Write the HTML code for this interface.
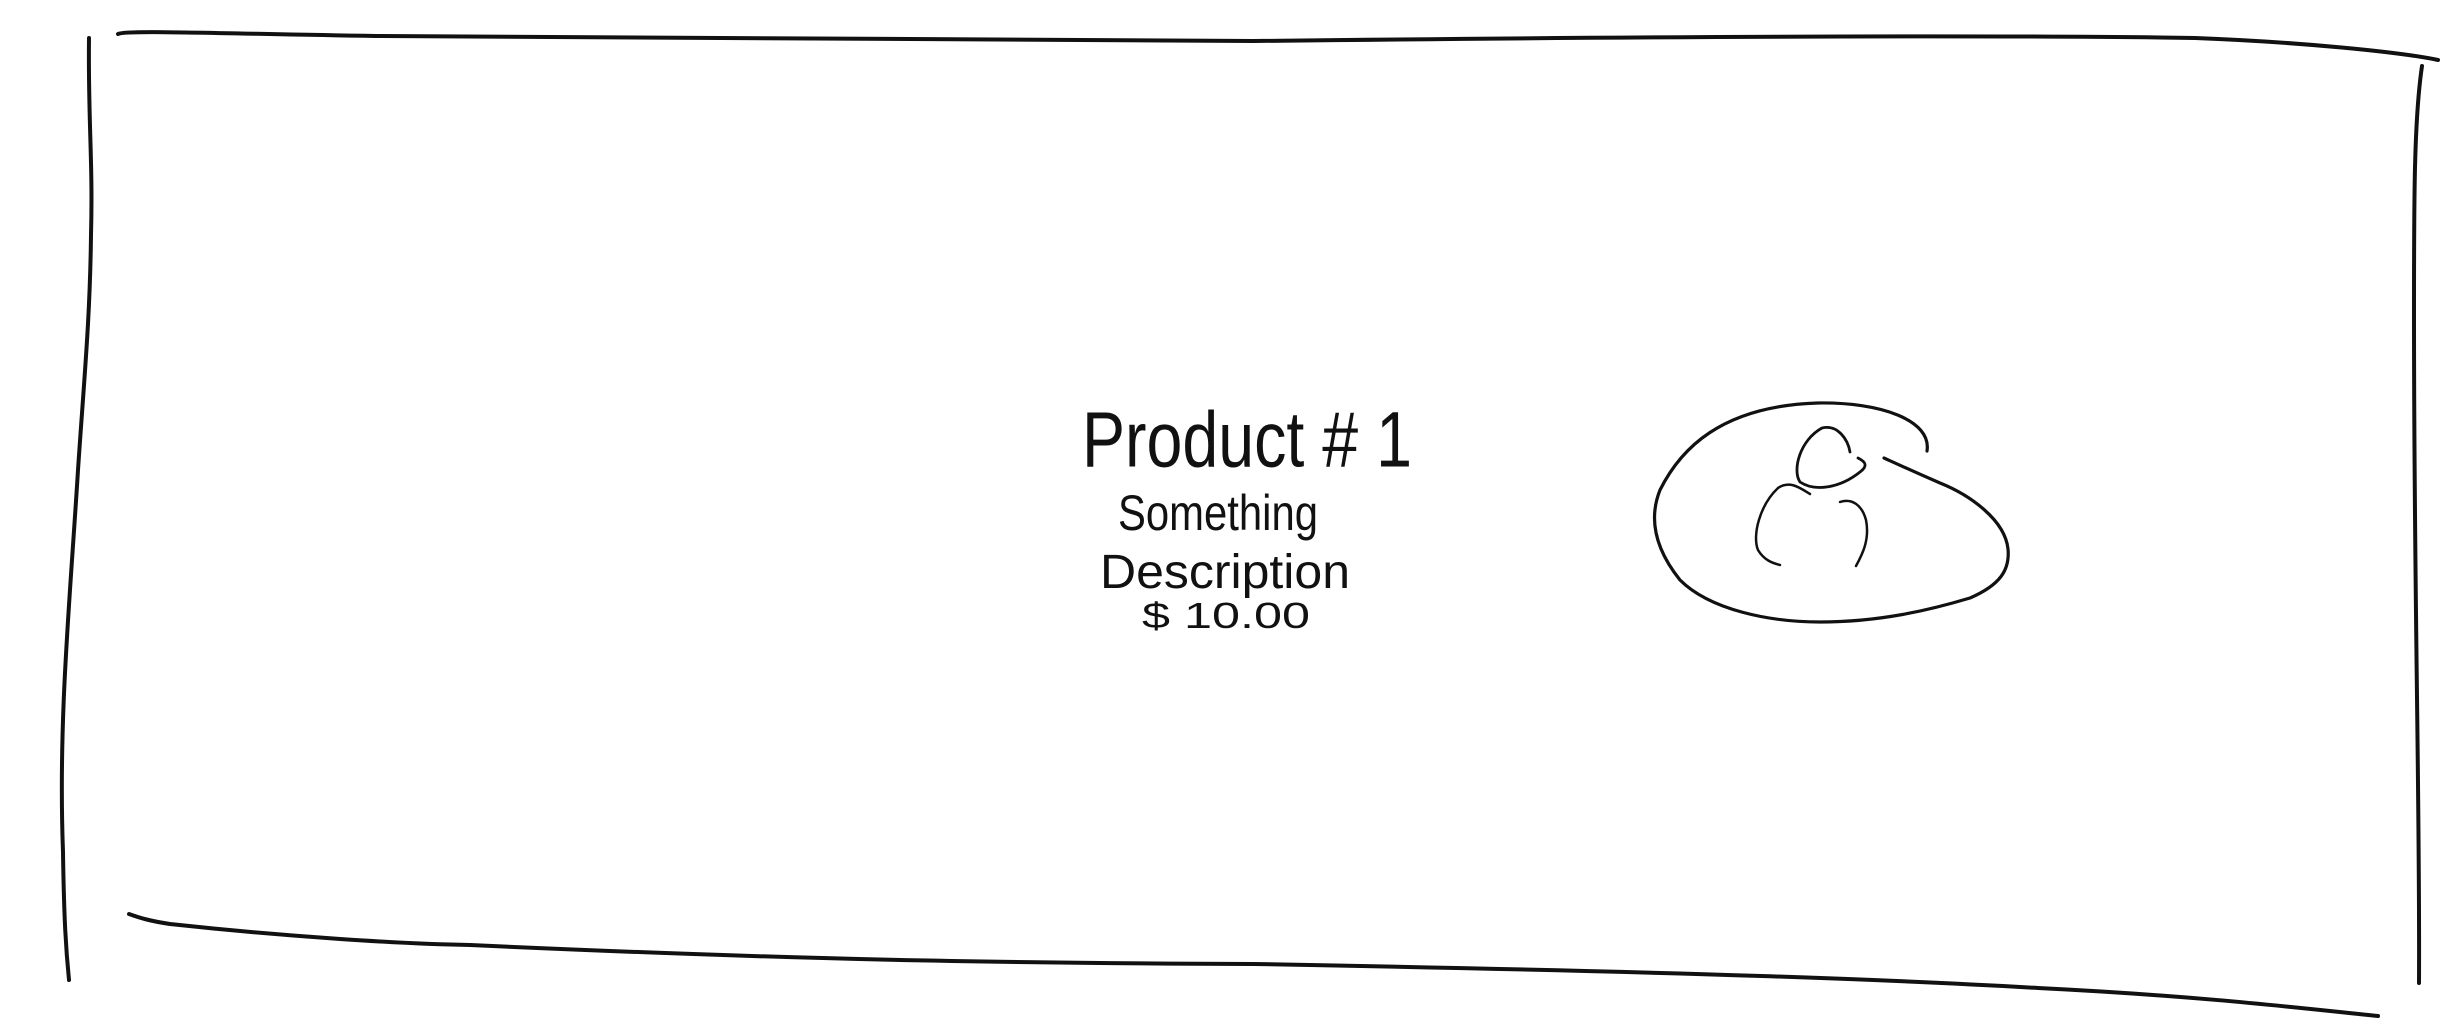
<!DOCTYPE html>
<html><head><meta charset="utf-8"><style>
html,body{margin:0;padding:0;background:#fff;width:2458px;height:1036px;overflow:hidden}
svg{display:block}
text{font-family:"Liberation Sans",sans-serif;fill:#111}
</style></head><body>
<svg width="2458" height="1036" viewBox="0 0 2458 1036" xmlns="http://www.w3.org/2000/svg">
<g fill="none" stroke="#111" stroke-linecap="round" stroke-width="4">
<path d="M118,34 C125,30 200,33 376,36 C700,40 1000,42 1254,41 C1700,36 2000,35 2195,38 C2300,42 2400,52 2438,60"/>
<path d="M89,38 C88,120 93,160 91,235 C90,320 84,380 78,470 C70,600 58,720 63,852 C64,920 66,950 69,980"/>
<path d="M2422,66 C2414,120 2414,200 2414,314 C2414,600 2420,800 2419,983"/>
<path d="M129,914 C140,918 150,921 170,924 C280,936 400,944 470,945 C800,960 1000,963 1254,964 C1700,972 1900,980 2038,988 C2200,996 2300,1008 2378,1016"/>
<path stroke-width="3.2" d="M1927,451 C1932,420 1880,402 1818,403 C1720,406 1680,450 1660,490 C1650,515 1652,545 1680,580 C1710,610 1770,622 1820,622 C1880,622 1930,610 1970,598 C2000,585 2010,570 2008,549 C2005,520 1970,495 1940,483 C1910,470 1895,463 1884,458"/>
<path stroke-width="2.8" d="M1858,458 C1866,462 1868,466 1860,472 C1840,488 1815,492 1800,482 C1792,470 1800,440 1822,428 C1838,424 1848,440 1850,452"/>
<path stroke-width="2.5" d="M1810,494 C1800,488 1790,480 1778,488 C1760,505 1752,535 1758,550 C1764,560 1772,563 1780,565"/>
<path stroke-width="2.5" d="M1840,502 C1852,498 1862,505 1866,520 C1870,540 1862,555 1856,566"/>
</g>
<g transform="translate(0,0)">
<text x="1082" y="466" font-size="70" textLength="330" lengthAdjust="spacingAndGlyphs" transform="translate(0,-60) scale(1,1.13)">Product # 1</text>
<text x="1118" y="530" font-size="50" textLength="200" lengthAdjust="spacingAndGlyphs">Something</text>
<text x="1100" y="588" font-size="48" textLength="250" lengthAdjust="spacingAndGlyphs">Description</text>
<text x="1142" y="628" font-size="36" textLength="168" lengthAdjust="spacingAndGlyphs">$ 10.00</text>
</g>
</svg>
</body></html>
